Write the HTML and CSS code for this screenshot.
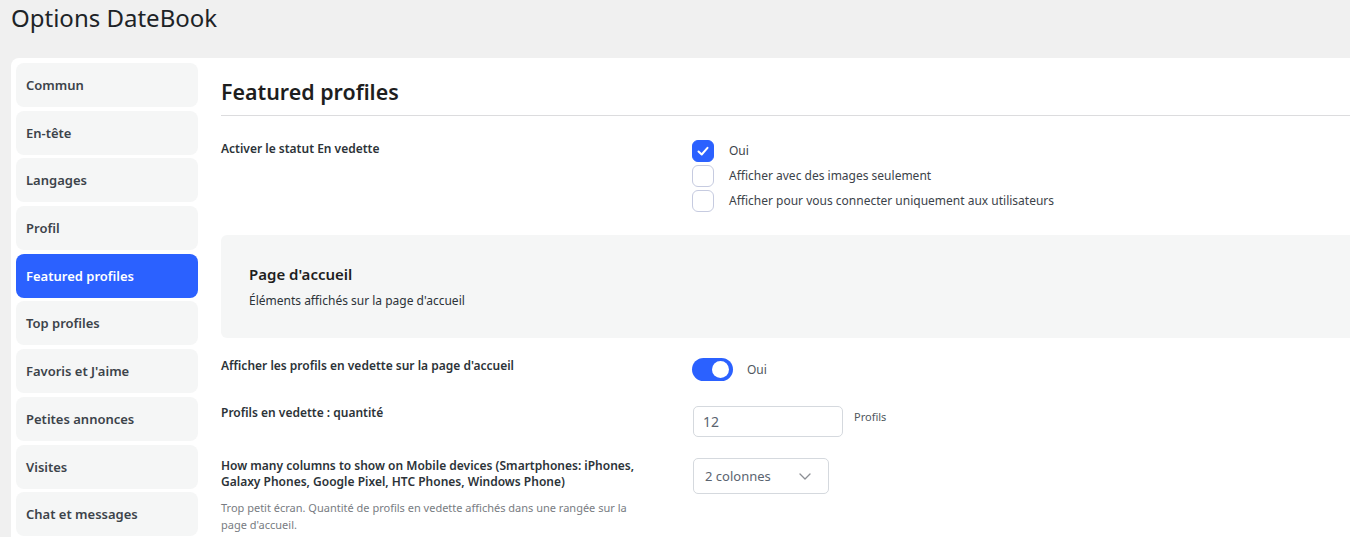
FILE: index.html
```html
<!DOCTYPE html>
<html lang="fr">
<head>
<meta charset="utf-8">
<title>Options DateBook</title>
<link rel="stylesheet" href="styles.css">
</head>
<body>
<h1 class="page-title">Options DateBook</h1>
<div class="panel">
  <nav class="sidebar">
    <div class="nav-item">Commun</div>
    <div class="nav-item">En-tête</div>
    <div class="nav-item">Langages</div>
    <div class="nav-item">Profil</div>
    <div class="nav-item active">Featured profiles</div>
    <div class="nav-item">Top profiles</div>
    <div class="nav-item">Favoris et J'aime</div>
    <div class="nav-item">Petites annonces</div>
    <div class="nav-item">Visites</div>
    <div class="nav-item">Chat et messages</div>
  </nav>
  <main class="main">
    <h2 class="section-title">Featured profiles</h2>

    <div class="row row-first">
      <div class="label">Activer le statut En vedette</div>
      <div class="control options">
        <label class="option">
          <span class="checkbox checked">
            <svg viewBox="0 0 22 22" width="22" height="22"><polyline points="6.5,11.5 9.7,14.5 15.5,7.8" fill="none" stroke="#fff" stroke-width="2" stroke-linecap="round" stroke-linejoin="round"/></svg>
          </span>
          <span class="option-text">Oui</span>
        </label>
        <label class="option">
          <span class="checkbox"></span>
          <span class="option-text">Afficher avec des images seulement</span>
        </label>
        <label class="option">
          <span class="checkbox"></span>
          <span class="option-text">Afficher pour vous connecter uniquement aux utilisateurs</span>
        </label>
      </div>
    </div>

    <div class="group-box">
      <div class="group-title">Page d'accueil</div>
      <div class="group-sub">Éléments affichés sur la page d'accueil</div>
    </div>

    <div class="row row-toggle">
      <div class="label">Afficher les profils en vedette sur la page d'accueil</div>
      <div class="control inline">
        <span class="toggle"><span class="knob"></span></span>
        <span class="toggle-text">Oui</span>
      </div>
    </div>

    <div class="row row-qty">
      <div class="label">Profils en vedette : quantité</div>
      <div class="control inline top">
        <div class="input">12</div>
        <span class="unit">Profils</span>
      </div>
    </div>

    <div class="row row-cols">
      <div class="label-block">
        <div class="label">How many columns to show on Mobile devices (Smartphones: iPhones, Galaxy Phones, Google Pixel, HTC Phones, Windows Phone)</div>
        <div class="desc">Trop petit écran. Quantité de profils en vedette affichés dans une rangée sur la page d'accueil.</div>
      </div>
      <div class="control">
        <div class="select">
          <span>2 colonnes</span>
          <svg viewBox="0 0 12 7" width="12" height="7"><polyline points="1,1 6,6 11,1" fill="none" stroke="#8c8f94" stroke-width="1.3" stroke-linecap="round" stroke-linejoin="round"/></svg>
        </div>
      </div>
    </div>
  </main>
</div>
</body>
</html>
```

FILE: styles.css
```css
* { box-sizing: border-box; }

html, body {
  margin: 0;
  padding: 0;
}

body {
  background: #f0f0f0;
  font-family: "Noto Sans", "Open Sans", "Liberation Sans", sans-serif;
  color: #2c3338;
  overflow: hidden;
  width: 1350px;
  height: 537px;
}

.page-title {
  margin: 0;
  padding: 2px 0 0 11px;
  height: 58px;
  font-size: 24px;
  font-weight: 400;
  line-height: 32px;
  color: #1d2327;
}

.panel {
  margin-left: 11px;
  background: #fff;
  border-top-left-radius: 8px;
  display: flex;
  padding: 5px 0 0 5px;
  height: 479px;
}

.sidebar {
  width: 182px;
  flex: none;
  display: flex;
  flex-direction: column;
  gap: 3.7px;
}

.nav-item {
  height: 44px;
  flex: none;
  display: flex;
  align-items: center;
  padding: 0 10px;
  background: #f5f6f6;
  border-radius: 8px;
  font-size: 13px;
  font-weight: 600;
  color: #3c434a;
}

.nav-item.active {
  background: #2b61ff;
  color: #fff;
}

.main {
  flex: 1;
  padding: 15px 0 0 23px;
  min-width: 0;
}

.section-title {
  margin: 0;
  font-size: 21.4px;
  font-weight: 600;
  line-height: 28px;
  color: #1e1e1e;
  padding-bottom: 9px;
  border-bottom: 1px solid #dcdcde;
}

.row {
  display: grid;
  grid-template-columns: 430px 1fr;
  column-gap: 41px;
  align-items: start;
}

.label {
  font-size: 12px;
  font-weight: 600;
  line-height: 16px;
  color: #2c3338;
}

.row-first { margin-top: 24px; }
.row-first .label { padding-top: 1px; }

.options {
  display: flex;
  flex-direction: column;
  gap: 3px;
}

.option {
  display: flex;
  align-items: center;
  gap: 15px;
  height: 22px;
}

.checkbox {
  width: 22px;
  height: 22px;
  border: 1px solid #c6cbe0;
  border-radius: 6px;
  background: #fff;
  flex: none;
  display: block;
}

.checkbox svg { display: block; margin: -1px; }

.checkbox.checked {
  background: #2b61ff;
  border-color: #2b61ff;
}

.option-text {
  font-size: 12px;
  color: #3c434a;
  line-height: 16px;
}

.group-box {
  margin-top: 23px;
  background: #f5f6f6;
  border-radius: 6px 0 0 6px;
  height: 103px;
  padding: 28px 28px 0;
}

.group-title {
  font-size: 15px;
  font-weight: 600;
  line-height: 22px;
  color: #1e1e1e;
}

.group-sub {
  margin-top: 7px;
  font-size: 12px;
  line-height: 18px;
  color: #2c3338;
}

.row-toggle { margin-top: 20px; }

.inline {
  display: flex;
  align-items: center;
  gap: 14px;
}

.inline.top { align-items: flex-start; }

.toggle {
  width: 41px;
  height: 23px;
  border-radius: 12px;
  background: #2b61ff;
  display: flex;
  align-items: center;
  justify-content: flex-end;
  padding-right: 4px;
}

.knob {
  width: 17px;
  height: 17px;
  border-radius: 50%;
  background: #fff;
}

.toggle-text {
  font-size: 12px;
  color: #50575e;
}

.row-qty { margin-top: 23px; }
.row-qty .control { padding-top: 2px; padding-left: 1px; }
.row-qty .label { padding-top: 1px; }

.input {
  width: 150px;
  height: 31px;
  border: 1px solid #d5d9de;
  border-radius: 5px;
  padding: 0 9px;
  display: flex;
  align-items: center;
  font-size: 14px;
  color: #5b6470;
}

.unit {
  font-size: 11px;
  color: #50575e;
  margin-top: 3px;
  margin-left: -3px;
}

.row-cols { margin-top: 21px; }
.row-cols .control { padding-left: 1px; }

.desc {
  margin-top: 9px;
  font-size: 11px;
  line-height: 17px;
  color: #787c82;
}

.select {
  width: 136px;
  height: 36px;
  border: 1px solid #d5d9de;
  border-radius: 5px;
  padding: 0 17px 0 11px;
  display: flex;
  align-items: center;
  justify-content: space-between;
  font-size: 13px;
  color: #5b6470;
}

.select svg { display: block; }
```
